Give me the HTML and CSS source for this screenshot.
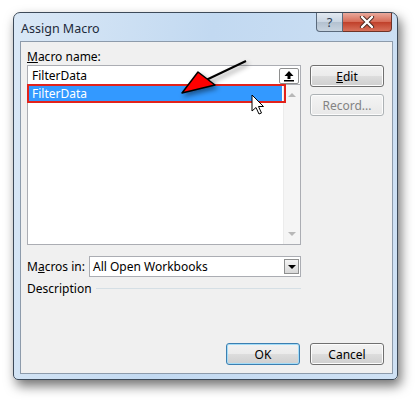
FILE: index.html
```html
<!DOCTYPE html>
<html lang="en">
<head>
  <meta charset="UTF-8">
  <title>Assign Macro</title>
  <link rel="stylesheet" href="styles.css">
</head>
<body>

<div class="window">
  <div class="titlebar">
    <span class="title">Assign Macro</span>
    <div class="caption">
      <span class="cap help">?</span>
      <span class="cap close">
        <svg width="16" height="12" viewBox="0 0 16 12"><path d="M3 1 L13 11 M13 1 L3 11" stroke="#4a2a22" stroke-width="4.2" stroke-linecap="round"/><path d="M3 1 L13 11 M13 1 L3 11" stroke="#fff" stroke-width="2.4" stroke-linecap="round"/></svg>
      </span>
    </div>
  </div>

  <div class="client">
    <div class="main">
      <div class="left">
        <div class="lbl"><u>M</u>acro name:</div>
        <div class="namebox">
          <span>FilterData</span>
          <span class="upbtn">
            <svg width="12" height="12" viewBox="0 0 12 12"><path d="M6 1 L1.5 6 H4.5 V9 H7.5 V6 H10.5 Z" fill="#000"/><rect x="1" y="10" width="10" height="1.5" fill="#000"/></svg>
          </span>
        </div>
        <div class="list">
          <div class="items">
            <div class="item sel">FilterData</div>
          </div>
          <div class="scroll">
            <span class="sa up"></span>
            <span class="sa down"></span>
          </div>
        </div>
        <div class="inrow">
          <span class="inlbl">M<u>a</u>cros in:</span>
          <div class="select">
            <span>All Open Workbooks</span>
            <span class="drop"></span>
          </div>
        </div>
        <div class="desc">
          <span>Description</span>
          <span class="rule"></span>
        </div>
      </div>
      <div class="right">
        <button class="btn"><u>E</u>dit</button>
        <button class="btn" disabled>Record...</button>
      </div>
    </div>
    <div class="footer">
      <button class="btn ok">OK</button>
      <button class="btn">Cancel</button>
    </div>
  </div>
</div>

<!-- annotation drawn over the dialog -->
<svg class="marks" width="417" height="400" viewBox="0 0 417 400">
  <defs>
    <filter id="sh" x="-50%" y="-50%" width="200%" height="200%">
      <feDropShadow dx="2" dy="3" stdDeviation="2.5" flood-color="#000" flood-opacity="0.45"/>
    </filter>
  </defs>
  <rect x="28" y="85" width="257" height="17" fill="none" stroke="#e3221b" stroke-width="2"/>
  <g filter="url(#sh)">
    <line x1="246" y1="61" x2="204" y2="81" stroke="#000" stroke-width="2"/>
    <polygon points="198,72 182,93 215,85" fill="#f00" stroke="#000" stroke-width="1.5" stroke-linejoin="round"/>
  </g>
  <path d="M252 95 L252 111 L256 107.5 L259 114 L261.5 113 L258.5 106.5 L263.5 106.5 Z" fill="#fff" stroke="#000" stroke-width="1" stroke-linejoin="round"/>
</svg>

</body>
</html>
```

FILE: styles.css
```css
body { margin: 0; background: #fff; font-family: "Noto Sans", sans-serif; font-size: 12px; color: #000; position: relative; width: 417px; height: 400px; overflow: hidden; }

.window { margin: 12px 0 0 13px; width: 385px; height: 368px; box-sizing: border-box; border: 1px solid #3d4a59; border-radius: 7px 7px 5px 5px; background: linear-gradient(100deg, #dae8f6 0%, #c2d9f1 45%, #cfe1f4 100%); padding: 0 4px 5px 6px; display: flex; flex-direction: column; box-shadow: 3px 6px 12px rgba(0,0,0,0.55); }

.titlebar { height: 28px; display: flex; justify-content: space-between; align-items: flex-start; }
.title { padding-top: 7px; padding-left: 1px; font-size: 12.5px; color: #1e2a3a; }
.caption { display: flex; margin-right: 1px; }
.cap { height: 18px; display: flex; align-items: center; justify-content: center; border: 1px solid #5b6a7c; border-top: none; }
.help { width: 25px; border-radius: 0 0 0 4px; background: linear-gradient(#e2e9f1 0%, #c9d5e2 50%, #b3c1d0 51%, #c7d3df 100%); color: #2f4155; font-size: 13px; }
.close { width: 48px; border-left: none; border-radius: 0 0 4px 0; background: linear-gradient(#e9a99c 0%, #d66a55 50%, #c0402a 51%, #d7705a 100%); border-color: #6f3327; }

.client { flex: 1; border: 1px solid #8d9bab; background: #f0f0f0; padding: 7px 8px 8px 6px; display: flex; flex-direction: column; }
.main { display: flex; gap: 9px; }
.left { width: 274px; }
.right { width: 74px; display: flex; flex-direction: column; gap: 7px; padding-top: 16px; }

.lbl { height: 16px; line-height: 15px; }
.namebox { height: 19px; box-sizing: border-box; border: 1px solid #abadb3; border-bottom: none; background: #fff; display: flex; justify-content: space-between; align-items: center; padding-left: 4px; }
.upbtn { width: 20px; height: 16px; box-sizing: border-box; border: 1px solid #8e8f8f; border-radius: 2px; background: #fff; display: flex; align-items: center; justify-content: center; margin-right: 1px; margin-top: 1px; }

.list { height: 161px; box-sizing: border-box; border: 1px solid #abadb3; background: #fff; display: flex; }
.items { flex: 1; padding: 1px 1px 0 1px; }
.item { height: 16px; line-height: 16px; padding-left: 3px; }
.item.sel { background: #3399ff; color: #fff; }
.scroll { width: 16px; background: #f5f5f5; border-left: 1px solid #ececec; display: flex; flex-direction: column; justify-content: space-between; align-items: center; padding: 8px 0 8px; }
.sa { width: 0; height: 0; border-left: 4px solid transparent; border-right: 4px solid transparent; }
.sa.up { border-bottom: 4px solid #b8b8b8; }
.sa.down { border-top: 4px solid #b8b8b8; }

.inrow { display: flex; align-items: center; margin-top: 11px; height: 21px; }
.inlbl { width: 62px; }
.select { flex: 1; height: 21px; box-sizing: border-box; border: 1px solid #abadb3; background: #fff; display: flex; align-items: center; justify-content: space-between; padding-left: 3px; }
.drop { width: 15px; height: 15px; box-sizing: border-box; border: 1px solid #8e8f8f; background: linear-gradient(#f4f4f4, #d8d8d8); margin-right: 1px; position: relative; }
.drop::after { content: ""; position: absolute; left: 3px; top: 5px; border-left: 4px solid transparent; border-right: 4px solid transparent; border-top: 4px solid #000; }

.desc { display: flex; align-items: center; margin-top: 4px; height: 15px; }
.rule { flex: 1; height: 1px; background: #d5dfe5; margin-left: 4px; }

.btn { width: 74px; height: 22px; box-sizing: border-box; font-family: "Noto Sans", sans-serif; font-size: 12px; color: #000; border: 1px solid #707070; border-radius: 3px; background: linear-gradient(#f2f2f2 0%, #ebebeb 50%, #dddddd 51%, #cfcfcf 100%); padding: 0; box-shadow: inset 0 0 0 1px #fcfcfc; }
.btn:disabled { color: #838383; border-color: #adb2b5; background: linear-gradient(#f4f4f4, #e8e8e8); }
.btn.ok { border-color: #3c7fb1; box-shadow: inset 0 0 0 1px #a4dcf7; }

.footer { margin-top: auto; display: flex; justify-content: flex-end; gap: 10px; }

.marks { position: absolute; left: 0; top: 0; pointer-events: none; }
```
